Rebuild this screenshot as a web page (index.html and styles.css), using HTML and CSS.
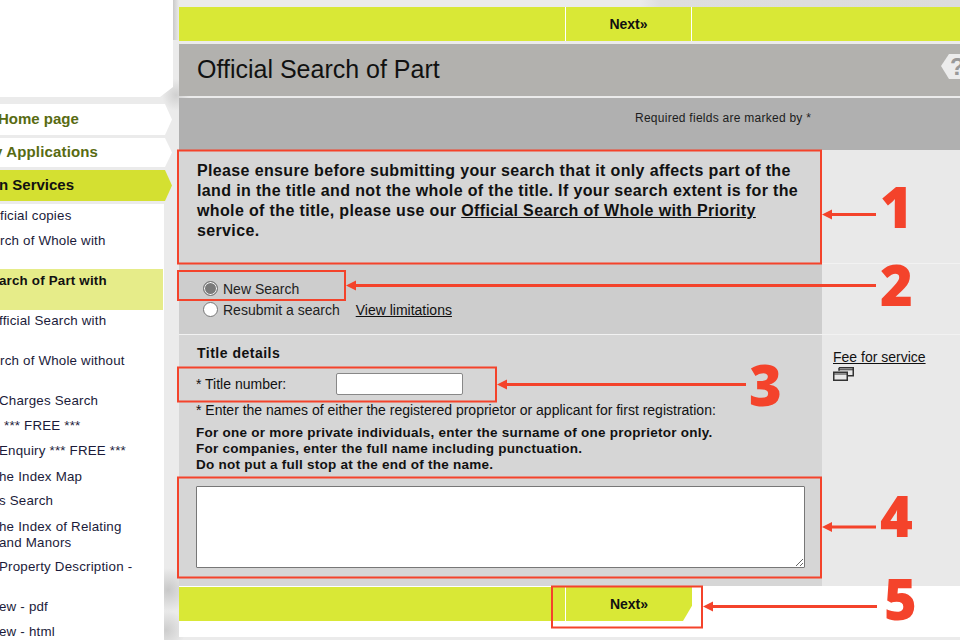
FILE: index.html
```html
<!DOCTYPE html>
<html lang="en">
<head>
<meta charset="utf-8">
<title>Official Search of Part</title>
<link rel="stylesheet" href="styles.css">
</head>
<body>
<div class="page">
  <aside class="side">
    <div class="logo-area"></div>
    <nav class="tabs">
      <a class="tab tab-home"><span class="i1">Home page</span></a>
      <a class="tab tab-apps"><span class="i2">y Applications</span></a>
      <a class="tab tab-active"><span class="i3">n Services</span></a>
    </nav>
    <ul class="sub">
      <li class="s1"><span class="o1">ficial copies</span></li>
      <li class="s2"><span class="o2">rch of Whole with</span></li>
      <li class="s2 cur"><span class="o3">arch of Part with</span></li>
      <li class="s2"><span class="o4">fficial Search with</span></li>
      <li class="s2"><span class="o2">rch of Whole without</span></li>
      <li class="s1"><span class="o5">Charges Search</span></li>
      <li class="s1"><span class="o6">*** FREE ***</span></li>
      <li class="s1"><span class="o5">Enquiry *** FREE ***</span></li>
      <li class="s1 nudge"><span class="o7">he Index Map</span></li>
      <li class="s1 tall"><span class="o8">s Search</span></li>
      <li class="s2"><span class="o7">he Index of Relating<br>and Manors</span></li>
      <li class="s2"><span class="o5">Property Description -</span></li>
      <li class="s1"><span class="o9">ew - pdf</span></li>
      <li class="s1"><span class="o9">ew - html</span></li>
    </ul>
  </aside>
  <main class="main">
    <div class="bar top-bar">
      <div class="bar-l"></div>
      <a class="bar-next">Next»</a>
      <div class="bar-r"></div>
    </div>
    <header class="title-band">
      <h1>Official Search of Part</h1>
      <div class="help">?</div>
    </header>
    <div class="req-band">Required fields are marked by *</div>
    <section class="row">
      <div class="cell c-a notice">
        <p>Please ensure before submitting your search that it only affects part of the land in the title and not the whole of the title. If your search extent is for the whole of the title, please use our <a>Official Search of Whole with Priority</a> service.</p>
      </div>
      <div class="cell-r"></div>
    </section>
    <section class="row">
      <div class="cell c-b radios">
        <label class="radio"><span class="dot on"></span>New Search</label>
        <label class="radio"><span class="dot"></span>Resubmit a search<a class="limits">View limitations</a></label>
      </div>
      <div class="cell-r"></div>
    </section>
    <section class="row row-last">
      <div class="cell c-a details">
        <h2>Title details</h2>
        <div class="field"><span class="field-label">* Title number:</span><input class="title-input" type="text"></div>
        <p class="enter">* Enter the names of either the registered proprietor or applicant for first registration:</p>
        <p class="rules">For one or more private individuals, enter the surname of one proprietor only.<br>For companies, enter the full name including punctuation.<br>Do not put a full stop at the end of the name.</p>
        <textarea class="names"></textarea>
      </div>
      <div class="cell-r fee">
        <a>Fee for service</a>
        <svg class="win" width="21" height="14" viewBox="0 0 21 14"><path d="M6 .75h14.250v8h-6M6 .75v3" fill="none" stroke="#333" stroke-width="1.500"/><path d="M.75 5.250h13.500v8h-13.500z" fill="none" stroke="#333" stroke-width="1.500"/><path d="M6 2.750h14M1 7h13" stroke="#333" stroke-width="1"/></svg>
      </div>
    </section>
    <div class="bottom">
      <div class="bar bottom-bar">
        <div class="bar-l"></div>
        <a class="bar-next">Next»</a>
      </div>
    </div>
  </main>

  <svg class="notes" width="960" height="640" viewBox="0 0 960 640">
    <g fill="none" stroke="#f4432b" stroke-width="2">
      <rect x="178" y="150.500" width="643" height="113"/>
      <rect x="178" y="271" width="167" height="29"/>
      <rect x="178" y="367.500" width="318" height="34"/>
      <rect x="178" y="477.500" width="643" height="100"/>
      <rect x="552" y="586.500" width="150" height="41"/>
    </g>
    <g stroke="#f4432b" stroke-width="3">
      <path d="M830 214.500h46M352 285.500h524M506 384.500h240M830 527h46M710 606.500h167"/>
    </g>
    <g fill="#f4432b">
      <path d="M822 214.500l10-5v10z"/>
      <path d="M346 285.500l10-5v10z"/>
      <path d="M497 384.500l10-5v10z"/>
      <path d="M822 527l10-5v10z"/>
      <path d="M703 606.500l10-5v10z"/>
    </g>
    <g class="num">
      <text x="880" y="228">1</text>
      <text x="880" y="306">2</text>
      <text x="749" y="406">3</text>
      <text x="880" y="537">4</text>
      <text x="884" y="620">5</text>
    </g>
  </svg>
</div>
</body>
</html>
```
FILE: styles.css
```css
* { box-sizing: border-box; }
html, body { margin: 0; height: 640px; overflow: hidden; }
body { font-family: "Liberation Sans", Arial, sans-serif; color: #111; background: #e8e8e8; }
.page { position: relative; width: 960px; height: 640px; overflow: hidden; display: flex;
  background:
    radial-gradient(ellipse 22px 22px at 168px 590px, #c8c8c8, transparent),
    radial-gradient(ellipse 20px 20px at 166px 630px, #cdcdcd, transparent),
    radial-gradient(ellipse 14px 16px at 176px 95px, #d0d0d0, transparent),
    linear-gradient(90deg, #c9c9c9 173px, transparent 179px) 0 0 / 100% 40px no-repeat,
    linear-gradient(90deg, transparent 640px, #dedede 660px, #dcdcdc) 0 0 / 100% 8px no-repeat,
    #ebebeb; }
a { color: inherit; }
.side { width: 173px; flex: none; }
.logo-area { height: 97px; background: #fff; clip-path: polygon(0 0, 100% 0, 100% 87px, 160px 100%, 0 100%); }
.tabs { padding-top: 7px; display: flex; flex-direction: column; }
.tab { height: 31px; margin-bottom: 3px; background: #fff; font-size: 15px; font-weight: bold; color: #586b12; line-height: 30px; white-space: nowrap; overflow: hidden;
  clip-path: polygon(0 0, 165px 0, 172px 50%, 165px 100%, 0 100%); }
.tab-apps { height: 29px; line-height: 28px; letter-spacing: .15px; }
.tab-active { background: #d4e031; color: #111; height: 31px; margin-bottom: 3px; }
.i1 { margin-left: -2px; }
.i2 { margin-left: -6px; }
.i3 { margin-left: -1px; }
.sub { width: 164px; height: 436px; margin: 0; padding: 0; list-style: none; background: #fff; font-size: 13.330px; letter-spacing: .2px; line-height: 16px; color: #1b1b3a; overflow: hidden; }
.sub li { padding: 4px 0; white-space: nowrap; overflow: hidden; }
.sub span { display: block; }
.s1 { height: 25px; }
.s2 { height: 40px; }
.sub .nudge { padding-top: 5px; }
.sub .tall { height: 26px; }
.sub .cur { background: #e6ec89; font-weight: bold; color: #111; width: 163px; height: 41px; margin-bottom: -1px; }
.o1 { margin-left: 0; } .o2 { margin-left: 0; } .o3 { margin-left: -1px; } .o4 { margin-left: -1px; }
.o5 { margin-left: -1px; } .o6 { margin-left: 4px; } .o7 { margin-left: -1px; } .o8 { margin-left: -1px; } .o9 { margin-left: -1px; }
.main { width: 781px; flex: none; margin-left: 6px; padding-top: 7px; }
.bar { display: flex; height: 34px; background: #d9e836; }
.bar-l { width: 387px; border-right: 1px solid #fff; }
.bar-next { width: 126px; border-right: 1px solid #fff; font-size: 14px; font-weight: bold; text-align: center; line-height: 34px; color: #111; }
.bar-r { flex: 1; }
.title-band { margin-top: 3px; height: 52px; background: #b2b1ae; position: relative; padding-left: 18px; overflow: hidden; }
.title-band h1 { margin: 0; font-weight: normal; font-size: 25px; line-height: 50px; color: #111; }
.help { position: absolute; left: 762px; top: 10px; width: 30px; height: 25px; background: #ececec; clip-path: polygon(8px 0, 30px 0, 30px 25px, 8px 25px, 0 12px); color: #999; font-size: 24px; font-weight: bold; line-height: 25px; padding-left: 9px; }
.req-band { margin-top: 2px; height: 52px; background: #b0b0b0; font-size: 12px; letter-spacing: .26px; line-height: 16px; padding: 12px 0 0 456px; color: #1c1c1c; }
.row { display: flex; border-bottom: 1px solid #f2f2f2; }
.row-last { border-bottom: 0; }
.cell { width: 643px; flex: none; }
.cell-r { flex: 1; background: #e9e9e9; }
.c-a { background: #d6d6d6; }
.c-b { background: #cdcdcd; }
.notice { height: 113px; padding: 11px 18px 0; font-size: 16px; letter-spacing: .36px; font-weight: bold; line-height: 20px; }
.notice p { margin: 0; }
.notice a { text-decoration: underline; }
.radios { height: 70px; padding: 15px 0 0 24px; font-size: 14px; color: #222; }
.radio { display: flex; align-items: center; height: 21px; margin-top: -1px; }
.radio + .radio { margin-top: 0; }
.dot { width: 15px; height: 15px; margin-right: 5px; border-radius: 50%; background: #fff; border: 1px solid #777; }
.dot.on { background: #7a7a7a; box-shadow: inset 0 0 0 1px #fff; }
.limits { margin-left: 16px; text-decoration: underline; color: #111; }
.details { height: 251px; padding: 10px 17px 0; font-size: 14px; }
.details h2 { margin: 0 1px; font-size: 14px; letter-spacing: .5px; font-weight: bold; line-height: 16px; }
.field { display: flex; align-items: center; height: 24px; margin-top: 11px; font-size: 14px; }
.field-label { width: 140px; }
.title-input { width: 127px; height: 22px; padding: 0; border: 1px solid #888; border-radius: 2px; background: #fff; }
.enter { margin: 5px 0 0; font-size: 14px; line-height: 18px; }
.rules { margin: 6px 0 0; font-size: 13.500px; letter-spacing: .25px; font-weight: bold; line-height: 16px; }
.names { display: block; width: 609px; height: 82px; margin-top: 13px; border: 1px solid #777; border-radius: 1px; background: #fff; padding: 2px; }
.fee { padding: 14px 11px 0; font-size: 14px; line-height: 16px; }
.fee a { display: block; text-decoration: underline; }
.win { display: block; margin-top: 2px; }
.bottom { height: 51px; background: #fff; padding-top: 1px; }
.bottom-bar { width: 513px; clip-path: polygon(0 0, 100% 0, 100% 55%, 504px 100%, 0 100%); }
.bottom-bar .bar-next { border-right: 0; }
.notes { position: absolute; left: 0; top: 0; pointer-events: none; }
.num { font-family: "Open Sans", sans-serif; font-weight: 800; font-size: 56px; fill: #f4432b; }
```
